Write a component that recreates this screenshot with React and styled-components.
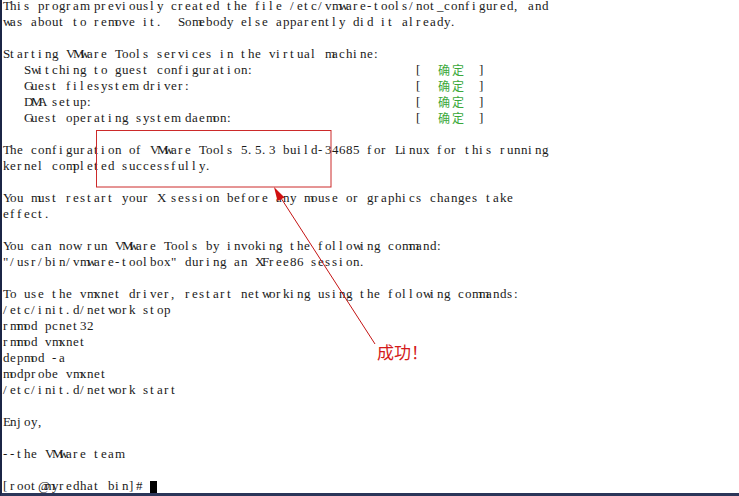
import React from "react";
import styled, { createGlobalStyle } from "styled-components";

const COL = 7;

const GlobalStyle = createGlobalStyle`
  html, body { margin: 0; padding: 0; background: #ffffff; }
  #root { width: 739px; height: 496px; }
`;

const Screen = styled.div`
  position: relative;
  width: 739px;
  height: 496px;
  box-sizing: border-box;
  border-left: 2px solid #1b2546;
  border-bottom: 3px solid #2b3659;
  background: #ffffff;
  overflow: hidden;
`;

const Terminal = styled.div`
  display: flex;
  flex-direction: column;
  margin-top: -2px;
  padding-left: 1px;
  font-family: "Liberation Serif", "Noto Sans CJK SC", serif;
  font-size: 13px;
  color: #1a1a1a;
`;

const Line = styled.div`
  display: flex;
  height: 16px;
  line-height: 16px;
  white-space: pre;
`;

const Cell = styled.span`
  display: inline-block;
  flex: 0 0 auto;
  width: ${(p) => (p.$wide ? COL * 2 : COL)}px;
  overflow: visible;
  white-space: pre;
  text-align: ${(p) => (p.$wide ? "center" : "left")};
  color: ${(p) => p.$color || "inherit"};
  font-family: ${(p) =>
    p.$wide ? '"Noto Sans CJK SC", sans-serif' : "inherit"};
  font-size: ${(p) => (p.$wide ? "12px" : "inherit")};
`;

const Cursor = styled.span`
  display: inline-block;
  flex: 0 0 auto;
  width: 7px;
  height: 14px;
  margin-top: 3px;
  background: #000000;
`;

const Overlay = styled.svg`
  position: absolute;
  left: -2px;
  top: 0;
  width: 739px;
  height: 496px;
  pointer-events: none;
`;

const Label = styled.div`
  position: absolute;
  left: 375px;
  top: 342px;
  font-family: "Noto Sans CJK SC", sans-serif;
  font-size: 17px;
  line-height: 20px;
  color: #d41a1a;
  white-space: nowrap;
`;

const GREEN = "#3aa83a";

const status = (label) => [
  { text: label.padEnd(59, " ") + "[  " },
  { text: "确定", color: GREEN },
  { text: "  ]" },
];

const LINES = [
  [{ text: "This program previously created the file /etc/vmware-tools/not_configured, and" }],
  [{ text: "was about to remove it.  Somebody else apparently did it already." }],
  [],
  [{ text: "Starting VMware Tools services in the virtual machine:" }],
  status("   Switching to guest configuration:"),
  status("   Guest filesystem driver:"),
  status("   DMA setup:"),
  status("   Guest operating system daemon:"),
  [],
  [{ text: "The configuration of VMware Tools 5.5.3 build-34685 for Linux for this running" }],
  [{ text: "kernel completed successfully." }],
  [],
  [{ text: "You must restart your X session before any mouse or graphics changes take" }],
  [{ text: "effect." }],
  [],
  [{ text: "You can now run VMware Tools by invoking the following command:" }],
  [{ text: "\"/usr/bin/vmware-toolbox\" during an XFree86 session." }],
  [],
  [{ text: "To use the vmxnet driver, restart networking using the following commands:" }],
  [{ text: "/etc/init.d/network stop" }],
  [{ text: "rmmod pcnet32" }],
  [{ text: "rmmod vmxnet" }],
  [{ text: "depmod -a" }],
  [{ text: "modprobe vmxnet" }],
  [{ text: "/etc/init.d/network start" }],
  [],
  [{ text: "Enjoy," }],
  [],
  [{ text: "--the VMware team" }],
  [],
  [{ text: "[root@myredhat bin]# " }, { cursor: true }],
];

const isWide = (ch) => ch.codePointAt(0) >= 0x2e80;

function TermLine({ segments }) {
  const cells = [];
  segments.forEach((seg, si) => {
    if (seg.cursor) {
      cells.push(<Cursor key={`c${si}`} />);
      return;
    }
    Array.from(seg.text).forEach((ch, ci) => {
      cells.push(
        <Cell key={`${si}-${ci}`} $wide={isWide(ch)} $color={seg.color}>
          {ch}
        </Cell>
      );
    });
  });
  return <Line>{cells}</Line>;
}

export default function App() {
  return (
    <>
      <GlobalStyle />
      <Screen>
        <Terminal>
          {LINES.map((segs, i) => (
            <TermLine key={i} segments={segs} />
          ))}
        </Terminal>
        <Overlay viewBox="0 0 739 496">
          <rect x="96.5" y="130.5" width="234.5" height="56.5" fill="none" stroke="#cc2a2a" strokeWidth="1" />
          <line x1="375" y1="344" x2="279" y2="195" stroke="#c41414" strokeWidth="1" />
          <polygon points="274,187 284.5,197.5 277.5,201" fill="#d01010" />
        </Overlay>
        <Label>成功！</Label>
      </Screen>
    </>
  );
}
